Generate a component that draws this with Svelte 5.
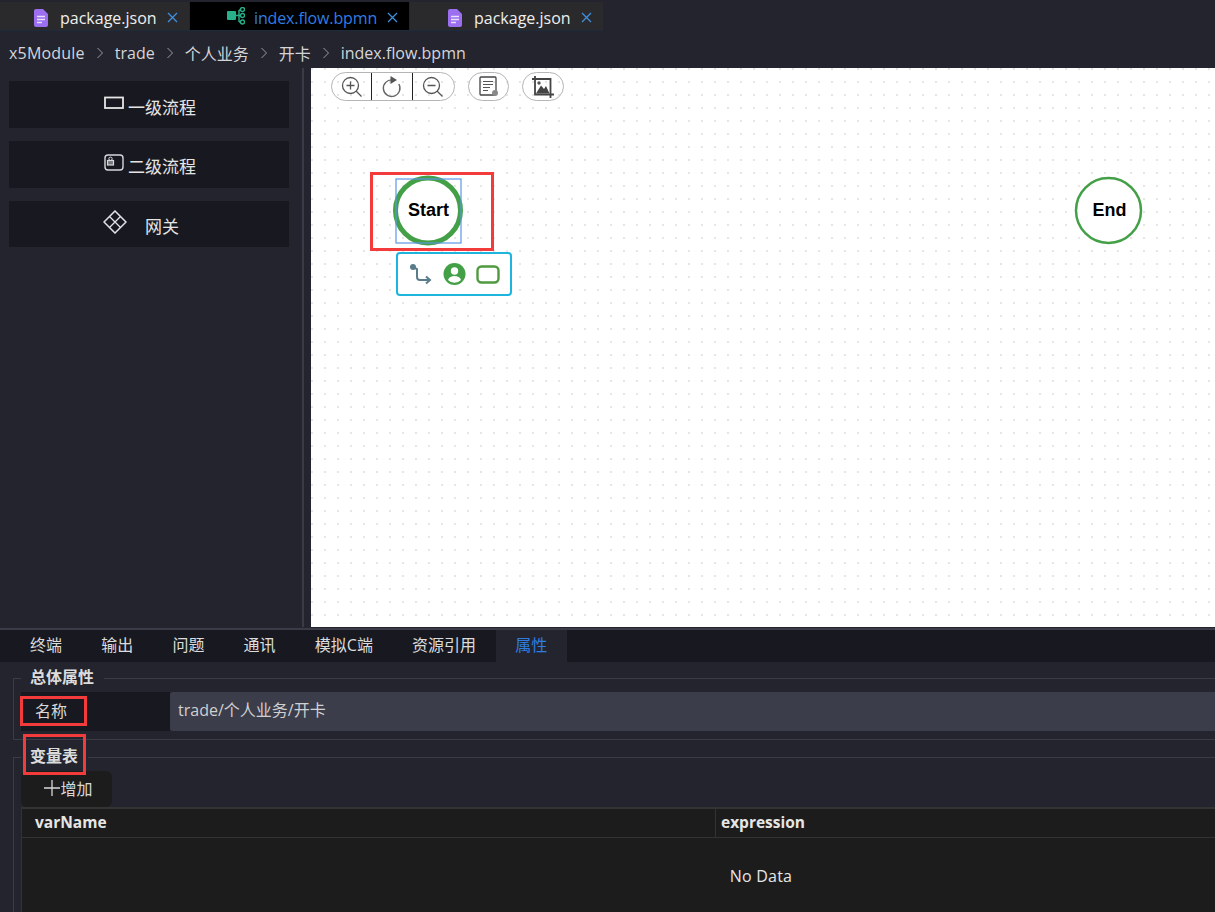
<script>
  const tabs = [
    { name: 'package.json', kind: 'file', width: 189, pad: 33 },
    { name: 'index.flow.bpmn', kind: 'flow', width: 219, pad: 37, active: true },
    { name: 'package.json', kind: 'file', width: 193, pad: 37 }
  ];
  const crumbs = ['x5Module', 'trade', '个人业务', '开卡', 'index.flow.bpmn'];
  const panelTabs = ['终端', '输出', '问题', '通讯', '模拟C端', '资源引用', '属性'];
</script>

<div class="app">
  <div class="tabbar">
    {#each tabs as t}
      <div class="tab" class:active={t.active} style="width:{t.width}px;padding-left:{t.pad}px">
        {#if t.kind === 'file'}
          <svg class="ficon" width="16" height="18" viewBox="0 0 16 18">
            <path d="M3 0h7l5 5v11a2 2 0 0 1-2 2H3a2 2 0 0 1-2-2V2a2 2 0 0 1 2-2z" fill="#9b6ff0" />
            <path d="M4 7.500h8M4 10.500h8M4 13.500h5" stroke="#e8defc" stroke-width="1.300" />
          </svg>
        {:else}
          <svg class="ficon flow" width="18" height="18" viewBox="0 0 18 18">
            <rect x="0" y="4" width="9" height="9" rx="1" fill="#27b08a" />
            <path d="M9 8.500h3M12 3v12M12 3h2M12 15h2M12 8.500h2" stroke="#27b08a" stroke-width="1.400" fill="none" />
            <circle cx="15.500" cy="2.500" r="2" fill="none" stroke="#27b08a" stroke-width="1.400" />
            <circle cx="15.500" cy="8.500" r="2" fill="none" stroke="#27b08a" stroke-width="1.400" />
            <circle cx="15.500" cy="15" r="2" fill="none" stroke="#27b08a" stroke-width="1.400" />
          </svg>
        {/if}
        <span class="tname">{t.name}</span>
        <svg class="close" width="11" height="11" viewBox="0 0 11 11"><path d="M1 1l9 9M10 1l-9 9" stroke="#3f8fe0" stroke-width="1.300" /></svg>
      </div>
    {/each}
  </div>

  <div class="crumbs">
    {#each crumbs as c, i}
      {#if i > 0}
        <svg class="chev" width="8" height="12" viewBox="0 0 8 12"><path d="M1.500 1l5 5-5 5" stroke="#9a9ba3" fill="none" /></svg>
      {/if}
      <span class:root={i === 0}>{c}</span>
    {/each}
  </div>

  <div class="main">
    <aside class="side">
      <div class="item lvl1">
        <svg class="sicon" width="20" height="14" viewBox="0 0 20 14"><rect x="1" y="1.500" width="18" height="10.500" fill="none" stroke="#e6e6e6" stroke-width="1.800" /></svg>
        <span>一级流程</span>
      </div>
      <div class="item lvl2">
        <svg class="sicon" width="20" height="18" viewBox="0 0 20 18">
          <rect x="1" y="1" width="18" height="15" rx="3" fill="none" stroke="#d5d8de" stroke-width="1.400" />
          <rect x="3.500" y="6.500" width="6" height="4.500" fill="#777" stroke="#d5d8de" stroke-width="1.200" />
          <circle cx="6.500" cy="4.800" r="1.700" fill="none" stroke="#d5d8de" stroke-width="1" />
        </svg>
        <span>二级流程</span>
      </div>
      <div class="item gate">
        <svg class="sicon" width="24" height="24" viewBox="0 0 24 24">
          <path d="M12 1l11 11-11 11L1 12z" fill="none" stroke="#e0e4ea" stroke-width="1.500" />
          <path d="M6.500 6.500l11 11M17.500 6.500l-11 11" stroke="#e0e4ea" stroke-width="1.300" />
        </svg>
        <span>网关</span>
      </div>
    </aside>
    <div class="rule"></div>
    <div class="canvas">
      <div class="tools">
        <div class="pill triple">
          <button aria-label="放大">
            <svg width="22" height="22" viewBox="0 0 22 22"><circle cx="9.500" cy="9.500" r="8" fill="none" stroke="#555" stroke-width="1.300" /><path d="M5.500 9.500h8M9.500 5.500v8M15 15l5.500 5.500" stroke="#555" stroke-width="1.300" /></svg>
          </button>
          <button aria-label="重置">
            <svg width="22" height="24" viewBox="0 0 22 24"><path d="M15.500 6.500A8.300 8.300 0 1 1 8 5.500" fill="none" stroke="#666" stroke-width="1.400" transform="rotate(25 11 13)" /><path d="M9.500 1l6.500 4-6.500 4z" fill="#555" /></svg>
          </button>
          <button aria-label="缩小">
            <svg width="22" height="22" viewBox="0 0 22 22"><circle cx="9.500" cy="9.500" r="8" fill="none" stroke="#555" stroke-width="1.300" /><path d="M5.500 9.500h8M15 15l5.500 5.500" stroke="#555" stroke-width="1.300" /></svg>
          </button>
        </div>
        <div class="pill single">
          <svg width="20" height="21" viewBox="0 0 20 21"><rect x="1" y="1" width="16" height="18" rx="1" fill="none" stroke="#444" stroke-width="1.300" /><path d="M4 5.500h10M4 8.500h10M4 11.500h7M4 14.500h5" stroke="#555" stroke-width="1.200" /><circle cx="16" cy="17" r="3" fill="#8a8a8a" /></svg>
        </div>
        <div class="pill single wide">
          <svg width="22" height="22" viewBox="0 0 22 22"><path d="M3 0v18.500h19M0 3h18.500v19" fill="none" stroke="#444" stroke-width="1.800" /><path d="M4 17.500l5-8 3 3.500 2-3 3.500 7.500z" fill="#444" /><circle cx="7" cy="7" r="1.700" fill="#555" /></svg>
        </div>
      </div>

      <svg class="diagram" viewBox="311 68 904 559" width="904" height="559">
        <circle cx="428" cy="210.500" r="32.500" fill="#fff" stroke="#43a047" stroke-width="5" />
        <rect x="396" y="179" width="65" height="64" fill="none" stroke="#5b97e5" stroke-width="1.200" />
        <text x="428.500" y="215.500" class="nodetext" text-anchor="middle">Start</text>

        <circle cx="1108.500" cy="210.500" r="32.500" fill="#fff" stroke="#43a047" stroke-width="2.500" />
        <text x="1109.500" y="215.500" class="nodetext" text-anchor="middle">End</text>

        <rect x="397" y="253" width="114" height="42" rx="3" fill="#fff" stroke="#1db5de" stroke-width="2" />
        <circle cx="413" cy="267" r="3" fill="#5a7d8c" />
        <path d="M413 267l4 2v8q0 3 3 3h9M426 276.500l4 3.500-4 3.500" fill="none" stroke="#5a7d8c" stroke-width="2" />
        <circle cx="454.500" cy="274" r="11" fill="#43a047" />
        <circle cx="454.500" cy="271" r="3.700" fill="#fff" />
        <path d="M448 280c1-3 3.500-4 6.500-4s5.500 1 6.500 4a9 9 0 0 1-13 0z" fill="#fff" />
        <rect x="477.500" y="266.500" width="21" height="16" rx="4" fill="#fff" stroke="#4f9a3f" stroke-width="2.400" />
      </svg>
    </div>
  </div>

  <section class="panel">
    <nav class="ptabs">
      {#each panelTabs as p, i}
        <div class="ptab" class:on={i === panelTabs.length - 1}>{p}</div>
      {/each}
    </nav>

    <fieldset class="fs first">
      <legend>总体属性</legend>
      <div class="row">
        <div class="rlabel">名称</div>
        <div class="rinput">trade/个人业务/开卡</div>
      </div>
    </fieldset>

    <fieldset class="fs second">
      <legend>变量表</legend>
      <button class="add">
        <svg width="16" height="16" viewBox="0 0 16 16"><path d="M0 8h16M8 0v16" stroke="#d8d8d8" stroke-width="1.300" /></svg>
        增加
      </button>
      <table>
        <thead>
          <tr><th class="c1">varName</th><th class="c2">expression</th></tr>
        </thead>
        <tbody>
          <tr><td colspan="2">No Data</td></tr>
        </tbody>
      </table>
    </fieldset>
  </section>

  <div class="mark m1"></div>
  <div class="mark m2"></div>
  <div class="mark m3"></div>
</div>

<style>
  :global(body) {
    margin: 0;
    background: #23242e;
    overflow: hidden;
  }
  .app {
    position: relative;
    width: 1215px;
    height: 912px;
    overflow: hidden;
    display: flex;
    flex-direction: column;
    background: #23242e;
    color: #d8d8d8;
    font-family: "Open Sans", "Noto Sans CJK SC", sans-serif;
    font-size: 16px;
  }
  .tabbar {
    height: 29px;
    padding-top: 2px;
    display: flex;
    flex: none;
  }
  .tab {
    box-sizing: border-box;
    height: 29px;
    padding-top: 3px;
    display: flex;
    align-items: center;
    background: #2a2a2c;
    border-bottom: 1px solid #1c2c3c;
    margin-right: 1px;
  }
  .tab.active {
    background: #000;
  }
  .tab.active .tname {
    color: #2f7de1;
    letter-spacing: -0.13px;
    margin-left: 10px;
  }
  .tname {
    margin-left: 11px;
    font-size: 16px;
    color: #eee;
  }
  .flow { margin-right: -1px; margin-top: -3px; }
  .close { margin-left: 10px; }
  .ficon { flex: none; }
  .crumbs {
    height: 37px;
    flex: none;
    box-sizing: border-box;
    padding: 7px 0 0 9px;
    display: flex;
    align-items: center;
    gap: 11px;
    font-size: 16px;
    color: #d4d5d9;
  }
  .root { letter-spacing: 0.2px; }
  .main {
    height: 559px;
    flex: none;
    display: flex;
  }
  .side {
    width: 302px;
    box-sizing: border-box;
    padding: 13px 13px 0 9px;
    display: flex;
    flex-direction: column;
    gap: 13px;
  }
  .item {
    height: 47px;
    background: #181920;
    display: flex;
    align-items: center;
    justify-content: center;
    color: #e4e4e4;
    font-size: 17px;
    gap: 4px;
  }
  .item span { margin-top: 3px; }
  .lvl2 span { margin-top: 1px; }
  .sicon { margin-top: -6px; }
  .lvl1 .sicon { margin-top: -4px; }
  .lvl2 .sicon { margin-top: -4px; }
  .lvl1, .lvl2 { padding-left: 2px; }
  .gate {
    height: 46px;
    gap: 18px;
    padding-right: 16px;
  }
  .gate .sicon { margin-top: -5px; }
  .rule {
    width: 2px;
    background: #3a3b47;
    margin-right: 7px;
  }
  .canvas {
    position: relative;
    flex: 1;
    background-color: #fff;
    background-image: radial-gradient(circle at 1px 1px, #e6e6e6 0.8px, transparent 1.100px);
    background-size: 13px 13px;
  }
  .tools {
    display: flex;
    gap: 13px;
    padding: 4px 0 0 20px;
    position: relative;
    z-index: 1;
  }
  .pill {
    box-sizing: border-box;
    height: 29px;
    border: 1px solid #b5b5b5;
    border-radius: 15px;
    display: flex;
    align-items: center;
    justify-content: center;
  }
  .triple { width: 124px; }
  .single { width: 41px; }
  .wide { width: 42px; }
  .triple button {
    border: 0;
    background: none;
    padding: 0;
    height: 27px;
    width: 41px;
    display: flex;
    align-items: center;
    justify-content: center;
  }
  .triple button:first-child { width: 38px; }
  .triple button + button { border-left: 1px solid #222; }
  .triple button:last-child { width: 42px; }
  .diagram {
    position: absolute;
    left: 0;
    top: 0;
  }
  .nodetext {
    font-family: "Liberation Sans", sans-serif;
    font-weight: 700;
    font-size: 18px;
    fill: #000;
  }
  .panel {
    flex: 1;
    min-height: 0;
    border-top: 2px solid #3a3b47;
    margin-top: 1px;
  }
  .ptabs {
    height: 32px;
    background: #181920;
    display: flex;
    padding-left: 10.400px;
  }
  .ptab {
    height: 32px;
    padding: 0 19.600px;
    line-height: 31px;
    font-size: 16px;
    color: #dcdcdc;
    white-space: nowrap;
  }
  .ptab.on {
    background: #23242e;
    color: #2f7de1;
  }
  .fs {
    margin: 3px 0 0 13px;
    padding: 1px 0 8px 7px;
    border: 1px solid #3a3b47;
    border-right: 0;
    min-width: 0;
  }
  .fs.second {
    margin-top: 4px;
    padding-bottom: 0;
    border-bottom: 0;
  }
  legend {
    padding: 0 10px 2px 9px;
    font-weight: 700;
    font-size: 16px;
    line-height: 24px;
    color: #dcdcdc;
  }
  .row {
    display: flex;
    height: 39px;
  }
  .rlabel {
    width: 149px;
    background: #181920;
    line-height: 39px;
    padding-left: 14px;
    box-sizing: border-box;
    flex: none;
  }
  .rinput {
    flex: 1;
    background: #3c3d4b;
    border-radius: 3px 0 0 3px;
    padding-left: 8px;
    line-height: 36px;
    color: #d0d0d0;
  }
  .add {
    display: flex;
    align-items: center;
    justify-content: center;
    width: 91px;
    height: 36px;
    padding: 0 0 2px 4px;
    border: 0;
    border-radius: 6px;
    background: #1c1c1c;
    color: #d8d8d8;
    font: inherit;
  }
  table {
    table-layout: fixed;
    width: 1479px;
    border-collapse: collapse;
    background: #1c1c1c;
    border-left: 1px solid #333;
    color: #e6e6e6;
  }
  th {
    height: 29px;
    padding: 0 0 2px;
    text-align: left;
    font-size: 15.500px;
    font-weight: 700;
    border-top: 2px solid #333;
    border-bottom: 1px solid #333;
    box-sizing: border-box;
  }
  .c1 { width: 694px; padding-left: 13px; box-sizing: border-box; }
  .c2 { border-left: 1px solid #333; padding-left: 5px; }
  td {
    height: 76px;
    text-align: center;
    font-size: 16px;
    letter-spacing: 0.2px;
    padding: 0;
  }
  .mark {
    position: absolute;
    box-sizing: border-box;
    border: 3px solid #f43b3b;
  }
  .m1 { left: 370px; top: 172px; width: 124px; height: 79px; }
  .m2 { left: 20px; top: 696px; width: 67px; height: 30px; }
  .m3 { left: 23px; top: 734px; width: 63px; height: 41px; }
</style>
